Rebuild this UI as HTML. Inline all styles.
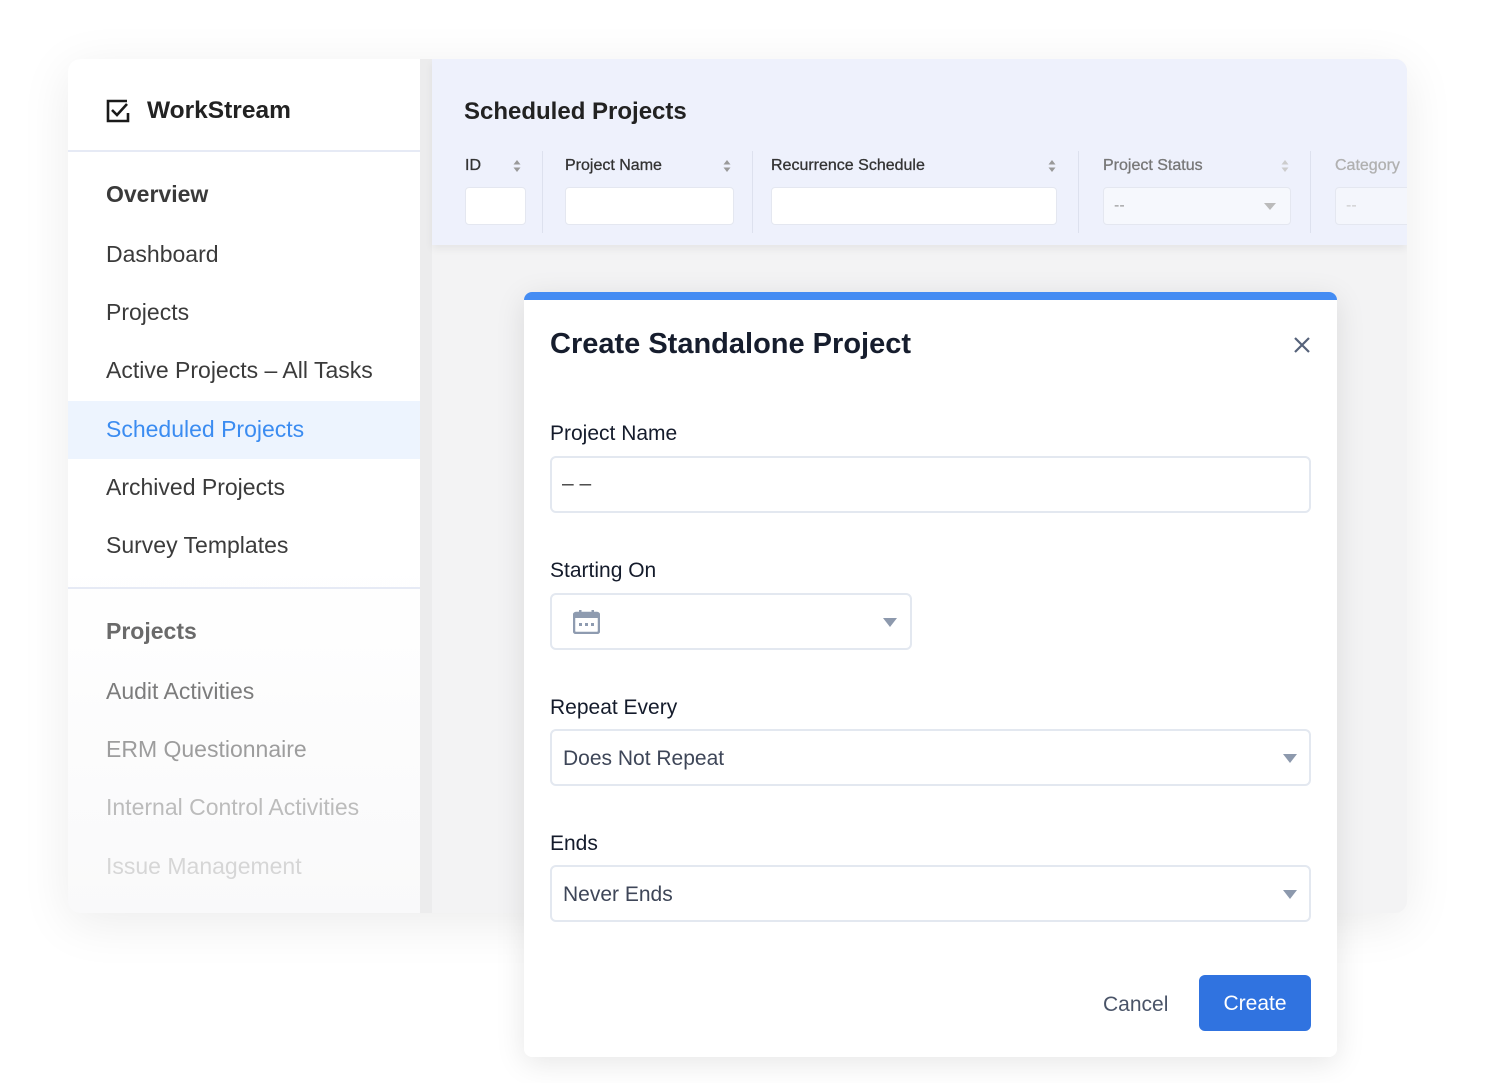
<!DOCTYPE html>
<html><head><meta charset="utf-8"><style>
*{margin:0;padding:0;box-sizing:border-box}
body{width:1488px;height:1083px;background:#fff;position:relative;overflow:hidden;font-family:"Liberation Sans",Arial,sans-serif}
.a{position:absolute;white-space:nowrap}
.card{left:68px;top:59px;width:1339px;height:854px;border-radius:12px;overflow:hidden;background:#f3f3f4;box-shadow:0 10px 50px rgba(0,0,0,.08)}
.side{left:0;top:0;width:352px;height:854px;background:linear-gradient(#fff 0,#fff 500px,#f9f9fa 854px)}
.nav{font-size:23px;color:#3b3b3b;left:38px}
.hdr{left:364px;top:0;width:975px;height:186px;background:#eef1fc;box-shadow:0 4px 8px rgba(0,0,0,.06)}
.col{font-size:16px;color:#333;top:98px;-webkit-text-stroke:.3px currentColor}
.inp{top:128px;height:38px;background:#fff;border:1px solid #e4e7f0;border-radius:4px}
.vd{top:92px;width:1px;height:82px;background:#dde1ee}
.sort{width:8px;height:14px;top:100px}
.modal{left:524px;top:292px;width:813px;height:765px;background:#fff;border-radius:8px;overflow:hidden;box-shadow:0 6px 30px rgba(0,0,0,.1)}
.lbl{font-size:21px;color:#141b2b;left:26px}
.box{left:26px;width:761px;height:57px;border:2px solid #e3e8f0;border-radius:6px;background:#fff}
.tri{position:absolute;width:0;height:0;border-left:7px solid transparent;border-right:7px solid transparent;border-top:9px solid #8d99ad}
</style></head><body>
<div class="a card">
  <div class="a side">
    <svg class="a" style="left:38px;top:40px" width="24" height="24" viewBox="0 0 24 24"><path d="M21 2H2v20h20v-8" fill="none" stroke="#1a1a1a" stroke-width="2.6"/><path d="M6 11l5 5 10-11" fill="none" stroke="#1a1a1a" stroke-width="2.6"/></svg>
    <div class="a" style="left:79px;top:38px;font-size:24.5px;font-weight:bold;color:#222">WorkStream</div>
    <div class="a" style="left:0;top:91px;width:352px;height:2px;background:#e6eaf5"></div>
    <div class="a nav" style="top:122px;font-weight:bold;color:#3a3a3a">Overview</div>
    <div class="a nav" style="top:182px">Dashboard</div>
    <div class="a nav" style="top:240px">Projects</div>
    <div class="a nav" style="top:298px">Active Projects – All Tasks</div>
    <div class="a" style="left:0;top:342px;width:352px;height:58px;background:#edf4fe"></div>
    <div class="a nav" style="top:357px;color:#3b8cf1">Scheduled Projects</div>
    <div class="a nav" style="top:415px">Archived Projects</div>
    <div class="a nav" style="top:473px">Survey Templates</div>
    <div class="a" style="left:0;top:528px;width:352px;height:2px;background:#e6eaf5"></div>
    <div class="a nav" style="top:559px;font-weight:bold;color:#6a6a6a">Projects</div>
    <div class="a nav" style="top:619px;color:#7c7c7c">Audit Activities</div>
    <div class="a nav" style="top:677px;color:#9d9d9d">ERM Questionnaire</div>
    <div class="a nav" style="top:735px;color:#bcbcbc">Internal Control Activities</div>
    <div class="a nav" style="top:794px;color:#d6d6d6">Issue Management</div>
  </div>
  <div class="a" style="left:352px;top:0;width:12px;height:854px;background:#ececed"></div>
  <div class="a hdr">
    <div class="a" style="left:32px;top:39px;font-size:24px;font-weight:bold;color:#222">Scheduled Projects</div>
    <div class="a col" style="left:33px">ID</div>
    <div class="a col" style="left:133px">Project Name</div>
    <div class="a col" style="left:339px">Recurrence Schedule</div>
    <div class="a col" style="left:671px;color:#777">Project Status</div>
    <div class="a col" style="left:903px;color:#b0b0b0">Category</div>
    <svg class="a sort" style="left:81px" viewBox="0 0 8 14"><path d="M4 1l3.5 4.5h-7zM4 13l3.5-4.5h-7z" fill="#999"/></svg>
    <svg class="a sort" style="left:291px" viewBox="0 0 8 14"><path d="M4 1l3.5 4.5h-7zM4 13l3.5-4.5h-7z" fill="#999"/></svg>
    <svg class="a sort" style="left:616px" viewBox="0 0 8 14"><path d="M4 1l3.5 4.5h-7zM4 13l3.5-4.5h-7z" fill="#999"/></svg>
    <svg class="a sort" style="left:849px" viewBox="0 0 8 14"><path d="M4 1l3.5 4.5h-7zM4 13l3.5-4.5h-7z" fill="#ccc"/></svg>
    <div class="a vd" style="left:110px"></div><div class="a vd" style="left:320px"></div><div class="a vd" style="left:646px"></div><div class="a vd" style="left:878px"></div>
    <div class="a inp" style="left:33px;width:61px"></div>
    <div class="a inp" style="left:133px;width:169px"></div>
    <div class="a inp" style="left:339px;width:286px"></div>
    <div class="a inp" style="left:671px;width:188px;background:#f6f8fd"><span class="a" style="left:10px;top:9px;color:#999;font-size:16px">--</span><span class="tri" style="left:160px;top:15px;border-top-color:#bbb;border-left-width:6px;border-right-width:6px;border-top-width:7px"></span></div>
    <div class="a inp" style="left:903px;width:120px;background:#f4f6fc"><span class="a" style="left:10px;top:9px;color:#ccc;font-size:16px">--</span></div>
  </div>
</div>
<div class="a modal">
  <div class="a" style="left:0;top:0;width:813px;height:8px;background:#448cf3"></div>
  <div class="a" style="left:26px;top:36px;font-size:29px;font-weight:bold;color:#161d2d">Create Standalone Project</div>
  <svg class="a" style="left:769px;top:44px" width="18" height="18" viewBox="0 0 18 18"><path d="M2 2l14 14M16 2L2 16" stroke="#56627a" stroke-width="2.2"/></svg>
  <div class="a lbl" style="top:130px">Project Name</div>
  <div class="a box" style="top:164px"><span class="a" style="left:10px;top:14px;font-size:21px;color:#444">– –</span></div>
  <div class="a lbl" style="top:267px">Starting On</div>
  <div class="a box" style="top:301px;width:362px">
    <svg class="a" style="left:21px;top:15px" width="27" height="24" viewBox="0 0 27 24"><rect x="1" y="3" width="25" height="20" rx="2" fill="none" stroke="#8e9bb0" stroke-width="2.5"/><rect x="1" y="3" width="25" height="5" fill="#8e9bb0"/><rect x="6" y="0" width="2.5" height="5" fill="#8e9bb0"/><rect x="18.5" y="0" width="2.5" height="5" fill="#8e9bb0"/><rect x="6" y="13" width="3" height="3" fill="#8e9bb0"/><rect x="12" y="13" width="3" height="3" fill="#8e9bb0"/><rect x="18" y="13" width="3" height="3" fill="#8e9bb0"/></svg>
    <span class="tri" style="left:331px;top:23px"></span>
  </div>
  <div class="a lbl" style="top:404px">Repeat Every</div>
  <div class="a box" style="top:437px"><span class="a" style="left:11px;top:16px;font-size:21px;color:#3e4658">Does Not Repeat</span><span class="tri" style="left:731px;top:23px"></span></div>
  <div class="a lbl" style="top:540px">Ends</div>
  <div class="a box" style="top:573px"><span class="a" style="left:11px;top:16px;font-size:21px;color:#3e4658">Never Ends</span><span class="tri" style="left:731px;top:23px"></span></div>
  <div class="a" style="left:579px;top:701px;font-size:21px;color:#4a5468">Cancel</div>
  <div class="a" style="left:675px;top:683px;width:112px;height:56px;background:#3073e0;border-radius:6px;color:#fff;font-size:21px;text-align:center;line-height:58px">Create</div>
</div>
</body></html>
